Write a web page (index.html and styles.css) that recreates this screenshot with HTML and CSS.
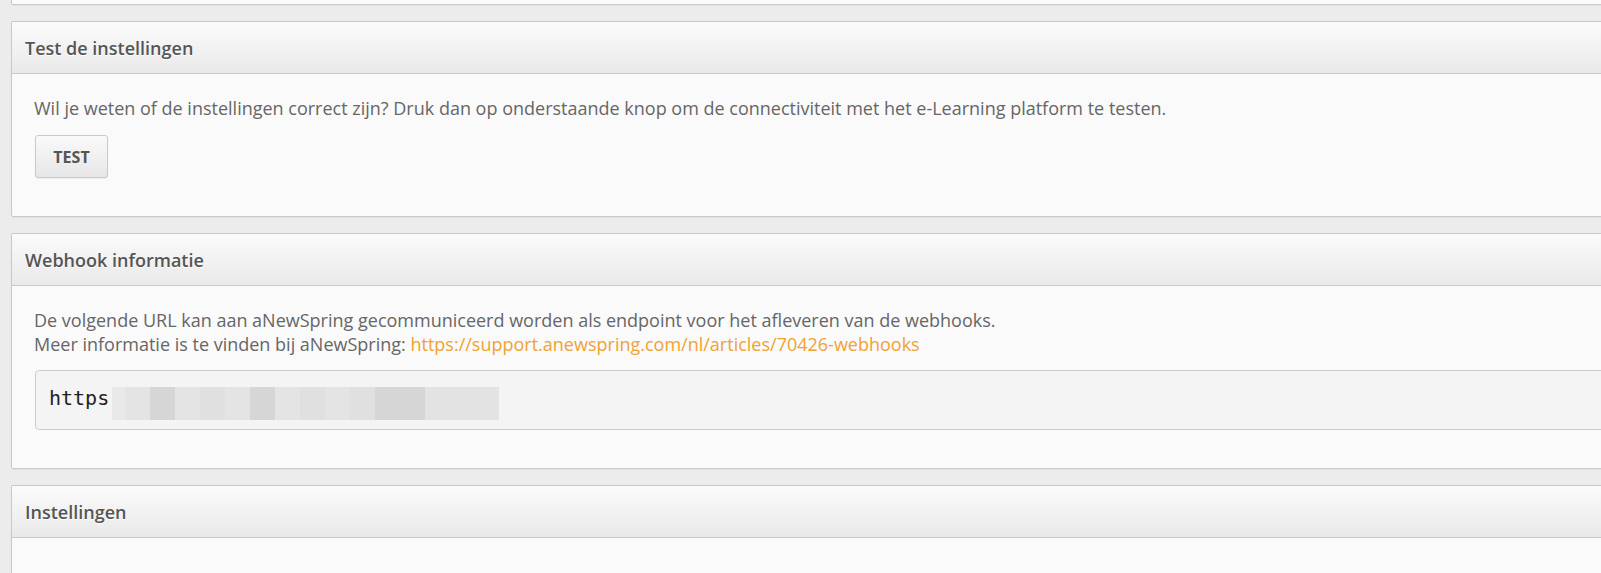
FILE: index.html
```html
<!DOCTYPE html>
<html lang="nl">
<head>
<meta charset="utf-8">
<title>Instellingen</title>
<link rel="stylesheet" href="styles.css">
</head>
<body>
<div class="page">
  <div class="panel panel-top"></div>

  <section class="panel">
    <header class="panel-head"><h2>Test de instellingen</h2></header>
    <div class="panel-body">
      <p>Wil je weten of de instellingen correct zijn? Druk dan op onderstaande knop om de connectiviteit met het e-Learning platform te testen.</p>
      <button class="btn" type="button">TEST</button>
    </div>
  </section>

  <section class="panel">
    <header class="panel-head"><h2>Webhook informatie</h2></header>
    <div class="panel-body">
      <p>De volgende URL kan aan aNewSpring gecommuniceerd worden als endpoint voor het afleveren van de webhooks.<br>
      Meer informatie is te vinden bij aNewSpring: <a href="#">https://support.anewspring.com/nl/articles/70426-webhooks</a></p>
      <div class="code">
        <span class="code-text">https</span>
        <span class="blur">
          <i class="b1"></i><i class="b2"></i><i class="b3"></i><i class="b2"></i><i class="b4"></i><i class="b2"></i><i class="b3"></i><i class="b2"></i><i class="b4"></i><i class="b2"></i><i class="b4"></i><i class="b3"></i><i class="b3"></i><i class="b5"></i>
        </span>
      </div>
    </div>
  </section>

  <section class="panel panel-last">
    <header class="panel-head"><h2>Instellingen</h2></header>
    <div class="panel-body"></div>
  </section>
</div>
</body>
</html>
```

FILE: styles.css
```css
html, body {
  margin: 0;
  padding: 0;
}
body {
  background: #ececec;
  font-family: "Open Sans", "Noto Sans", sans-serif;
  color: #666;
  overflow: hidden;
  height: 573px;
}
.page {
  padding-left: 11px;
  margin-right: -40px;
  display: flex;
  flex-direction: column;
  gap: 16px;
  margin-top: -10px;
}
.panel {
  background: #fafafa;
  border: 1px solid #c9c9c9;
  border-radius: 2px;
  box-shadow: 0 1px 1px rgba(0,0,0,0.04);
}
.panel-top {
  height: 14px;
  border-top: none;
}
.panel-head {
  height: 52px;
  box-sizing: border-box;
  background: linear-gradient(#fbfbfb, #e9e9e9);
  border-bottom: 1px solid #c9c9c9;
  display: flex;
  align-items: center;
  padding-left: 13px;
}
.panel-head h2 {
  margin: 0;
  font-size: 18px;
  font-weight: 600;
  color: #555;
  text-shadow: 0 1px 0 #fff;
}
.panel-body {
  padding: 22px 22px 38px;
}
.panel-body p {
  margin: 0;
  font-size: 18px;
  line-height: 24px;
  color: #666;
}
.panel-body a {
  color: #f0a233;
  text-decoration: none;
}
.btn {
  display: block;
  margin-top: 15px;
  margin-left: 1px;
  width: 73px;
  height: 43px;
  background: linear-gradient(#fafafa, #e6e6e6);
  border: 1px solid #c9c9c9;
  border-radius: 3px;
  font-family: "Open Sans", sans-serif;
  font-weight: 700;
  font-size: 16px;
  color: #555;
  padding: 0;
  box-shadow: 0 1px 1px rgba(0,0,0,0.05);
}
.code {
  margin-top: 14px;
  margin-left: 1px;
  height: 60px;
  box-sizing: border-box;
  background: #f4f4f4;
  border: 1px solid #cccccc;
  border-radius: 4px;
  display: flex;
  align-items: center;
  padding-left: 13px;
}
.code-text {
  font-family: "DejaVu Sans Mono", monospace;
  font-size: 20px;
  color: #222;
  margin-top: -4px;
}
.blur {
  display: flex;
  height: 33px;
  margin-top: 7px;
  margin-left: 3px;
}
.blur i {
  display: block;
  width: 25px;
  height: 100%;
}
.blur .b1 { width: 13px; background: #e9e9e9; }
.blur .b2 { background: #e4e4e4; }
.blur .b3 { background: #d6d6d6; }
.blur .b4 { background: #e0e0e0; }
.blur .b5 { width: 74px; background: #e3e3e3; }
.panel-last .panel-body {
  height: 60px;
}
```
